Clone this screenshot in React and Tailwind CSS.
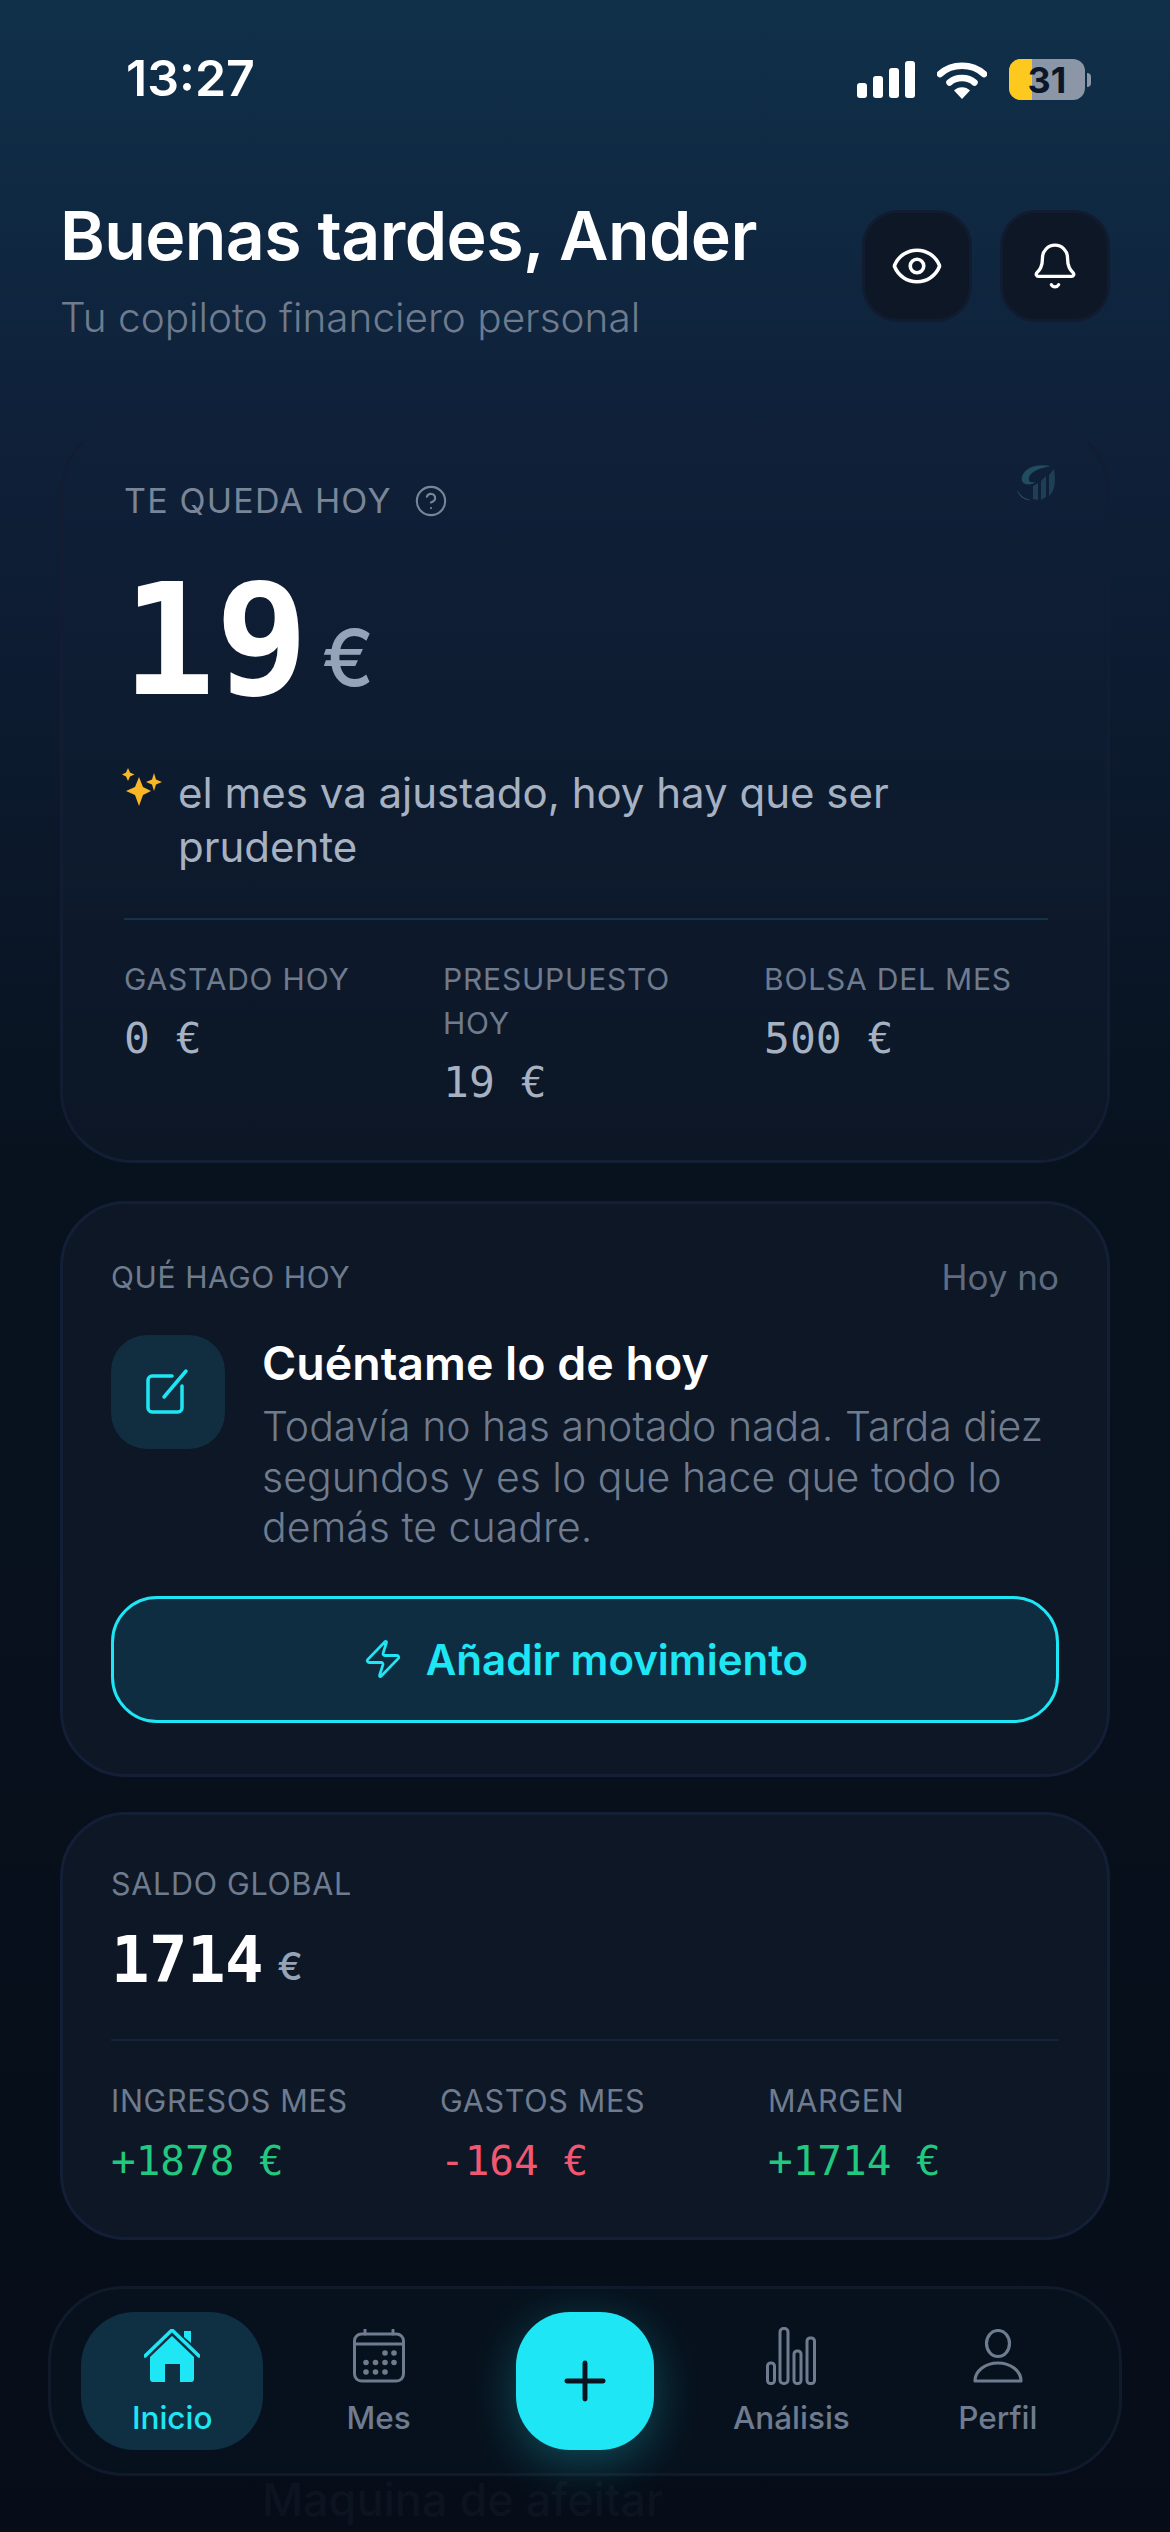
import { Bell, CircleHelp, Eye, Plus, Zap } from "lucide-react";

const sans = "font-['Inter',sans-serif]";
const mono = "font-['DejaVu_Sans_Mono',monospace]";

const todayStats = [
  { label: "GASTADO HOY", value: "0 €" },
  { label: "PRESUPUESTO HOY", value: "19 €" },
  { label: "BOLSA DEL MES", value: "500 €" },
];

const monthStats = [
  { label: "INGRESOS MES", value: "+1878 €", color: "text-[#22c87f]" },
  { label: "GASTOS MES", value: "-164 €", color: "text-[#f25772]" },
  { label: "MARGEN", value: "+1714 €", color: "text-[#22c87f]" },
];

function StatusBar() {
  return (
    <div className="flex h-[124px] items-end justify-between pb-[24px] pl-[126px] pr-[79px]">
      <span className="mb-[-3px] font-['Inter',sans-serif] text-[50px] leading-[50px] font-semibold text-white">13:27</span>
      <div className="flex items-center gap-[22px]">
        <div className="flex items-end gap-[6px]">
          <span className="h-[15px] w-[10px] rounded-[3px] bg-white" />
          <span className="h-[22px] w-[10px] rounded-[3px] bg-white" />
          <span className="h-[30px] w-[10px] rounded-[3px] bg-white" />
          <span className="h-[37px] w-[10px] rounded-[3px] bg-white" />
        </div>
        <svg width="50" height="38" viewBox="0 0 50 38" fill="none">
          <path d="M3 13C15 2 35 2 47 13" stroke="white" strokeWidth="6.5" strokeLinecap="round" />
          <path d="M12.5 21.5C19 15.5 31 15.5 37.5 21.5" stroke="white" strokeWidth="6.5" strokeLinecap="round" />
          <path d="M17 29.5C21 25 29 25 33 29.5L25 38Z" fill="white" />
        </svg>
        <div className="flex items-center gap-[2px]">
          <div className="relative h-[41px] w-[76px] overflow-hidden rounded-[12px] bg-[#8b96a6]">
            <div className="h-full w-[23px] bg-[#fdc91e]" />
            <span className="absolute inset-0 flex items-center justify-center font-['Inter',sans-serif] text-[36px] font-bold text-[#0d1626]">31</span>
          </div>
          <span className="h-[14px] w-[4px] rounded-r-full bg-[#8b96a6]" />
        </div>
      </div>
    </div>
  );
}

function Header() {
  return (
    <div className="mt-[75px] flex items-start justify-between pl-[60px] pr-[60px]">
      <div>
        <h1 className={`${sans} text-[68px] leading-[72px] font-semibold tracking-[-0.6px] text-white`}>Buenas tardes, Ander</h1>
        <p className={`${sans} mt-[22px] text-[40.500px] leading-[50px] font-light text-[#6f7b8e]`}>Tu copiloto financiero personal</p>
      </div>
      <div className="mt-[11px] flex gap-[28px]">
        <button className="flex h-[112px] w-[110px] items-center justify-center rounded-[36px] border-[3px] border-[#111c30] bg-[#0e1726] text-white">
          <Eye size={54} strokeWidth={1.6} />
        </button>
        <button className="flex h-[112px] w-[110px] items-center justify-center rounded-[36px] border-[3px] border-[#111c30] bg-[#0e1726] text-white">
          <Bell size={50} strokeWidth={1.6} />
        </button>
      </div>
    </div>
  );
}

function Logo() {
  return (
    <svg width="40" height="40" viewBox="0 0 40 40" fill="none" className="opacity-60">
      <path d="M6 14C8 5 20 0 35 3C25 5 14 8 13 15C12 19 16 20 20 19C12 24 4 21 6 14Z" fill="#2f6b7c" />
      <path d="M17 23L22 20V37L17 36ZM25 18L30 13V34L25 37ZM33 12L38 6C40 18 39 28 33 33Z" fill="#2a5566" />
      <path d="M1 27C5 33 9 36 15 37C9 38 3 34 1 27Z" fill="#2f6b7c" />
    </svg>
  );
}

function Sparkles() {
  return (
    <svg width="40" height="38" viewBox="0 0 40 38" className="mt-[-2px] shrink-0">
      <path d="M17 9L21 19L29 23L21 27L17 38L13 27L4 23L13 19Z" fill="#f9b626" />
      <path d="M32 5L34 11.500L40 14L34 16.500L32 23L30 16.500L24 14L30 11.500Z" fill="#f9b626" />
      <path d="M6 0L8 4.500L12.500 6.500L8 8.500L6 13L4 8.500L0 6.500L4 4.500Z" fill="#f9b626" />
    </svg>
  );
}

function TodayCard() {
  return (
    <section className="mx-[60px] mt-[77px] h-[743px] rounded-[72px] border-[3px] border-transparent border-b-[#131f36] border-l-[#121d33] border-r-[#121d33] bg-linear-to-b bg-origin-border from-[#0f2039] to-[#0c1625] px-[61px]">
      <div className="flex items-start justify-between pt-[60px]">
        <div className="flex items-center gap-[22px]">
          <span className={`${sans} text-[34px] leading-[36px] tracking-[1.2px] text-[#7a8598]`}>TE QUEDA HOY</span>
          <CircleHelp size={34} strokeWidth={1.5} className="text-[#7a8598]" />
        </div>
        <div className="mr-[-10px] mt-[-20px]">
          <Logo />
        </div>
      </div>
      <div className="mt-[38px] flex items-end">
        <span className={`${mono} ml-[-2px] text-[155px] leading-[168px] font-bold text-white`}>19</span>
        <span className={`${sans} mb-[25px] ml-[13px] text-[78px] leading-[84px] font-medium text-[#94a3b8]`}>€</span>
      </div>
      <div className="mt-[41px] flex gap-[16px]">
        <div className="-ml-[2px] pt-[4px]">
          <Sparkles />
        </div>
        <p className={`${sans} w-[800px] text-[42px] leading-[54px] text-[#a6b1c2]`}>el mes va ajustado, hoy hay que ser prudente</p>
      </div>
      <div className="mt-[44px] h-[2px] w-[924px] bg-[#14334a]" />
      <div className="mt-[37px] grid grid-cols-[319px_321px_1fr]">
        {todayStats.map((stat) => (
          <div key={stat.label}>
            <div className={`${sans} w-[270px] text-[30px] leading-[44px] tracking-[0.8px] text-[#6f7b8e]`}>{stat.label}</div>
            <div className={`${mono} mt-[12px] text-[43px] leading-[50px] text-[#a6b1c2]`}>{stat.value}</div>
          </div>
        ))}
      </div>
    </section>
  );
}

function ActionCard() {
  return (
    <section className="mx-[60px] mt-[38px] h-[576px] rounded-[66px] border-[3px] border-[#131f36] bg-[#0d1726] px-[48px] pt-[53px]">
      <div className="flex items-center justify-between">
        <span className={`${sans} text-[30px] leading-[40px] tracking-[0.6px] text-[#6f7b8e]`}>QUÉ HAGO HOY</span>
        <span className={`${sans} text-[35px] leading-[40px] text-[#5f6b7e]`}>Hoy no</span>
      </div>
      <div className="mt-[38px] flex items-start gap-[37px]">
        <div className="flex h-[114px] w-[114px] shrink-0 items-center justify-center rounded-[36px] bg-[#112d40]">
          <svg width="48" height="48" viewBox="0 0 48 48" fill="none" stroke="#1fe6f5" strokeWidth="3.5" strokeLinecap="round" strokeLinejoin="round">
            <path d="M28 8H8C6 8 4 10 4 12V40C4 42 6 44 8 44H34C36 44 38 42 38 40V18" />
            <path d="M20 29L42 3" />
          </svg>
        </div>
        <div className="min-w-0">
          <h2 className={`${sans} mt-[2px] text-[46.500px] leading-[52px] font-semibold text-white`}>Cuéntame lo de hoy</h2>
          <p className={`${sans} mt-[12px] w-[800px] text-[41px] leading-[50.500px] font-light text-[#6f7b8e]`}>
            Todavía no has anotado nada. Tarda diez segundos y es lo que hace que todo lo demás te cuadre.
          </p>
        </div>
      </div>
      <button className="mt-[43px] flex h-[127px] w-full items-center justify-center gap-[22px] rounded-[46px] border-[3px] border-[#1fe6f5] bg-[#0f2d40]">
        <Zap size={42} strokeWidth={1.6} className="text-[#1fe6f5]" />
        <span className={`${sans} text-[42px] font-semibold text-[#1fe6f5]`}>Añadir movimiento</span>
      </button>
    </section>
  );
}

function BalanceCard() {
  return (
    <section className="mx-[60px] mt-[35px] h-[428px] rounded-[66px] border-[3px] border-[#131f36] bg-[#0d1726] px-[48px] pt-[49px]">
      <div className={`${sans} text-[30.500px] leading-[40px] tracking-[0.7px] text-[#6f7b8e]`}>SALDO GLOBAL</div>
      <div className="mt-[18px] flex items-end gap-[14px]">
        <span className={`${mono} text-[64px] leading-[76px] font-bold tracking-[-0.5px] text-white`}>1714</span>
        <span className={`${sans} mb-[10px] text-[38px] leading-[44px] font-medium text-[#94a3b8]`}>€</span>
      </div>
      <div className="mt-[41px] h-[2px] w-full bg-[#14233a]" />
      <div className="mt-[40px] grid grid-cols-[329px_328px_1fr]">
        {monthStats.map((stat) => (
          <div key={stat.label}>
            <div className={`${sans} text-[30.500px] leading-[40px] tracking-[0.7px] text-[#6f7b8e]`}>{stat.label}</div>
            <div className={`${mono} mt-[15px] text-[41px] leading-[50px] ${stat.color}`}>{stat.value}</div>
          </div>
        ))}
      </div>
    </section>
  );
}

function HomeIcon() {
  return (
    <svg width="56" height="54" viewBox="0 0 56 54" fill="#1fe6f5">
      <path d="M40 2H47V14L40 8Z" />
      <path d="M1 27L28 1L55 27" fill="none" stroke="#1fe6f5" strokeWidth="3.500" strokeLinecap="round" strokeLinejoin="round" />
      <path d="M28 7L50 28V50C50 52 49 53 47 53H36V35H21V53H9C7 53 6 52 6 50V28Z" />
    </svg>
  );
}

function CalendarIcon() {
  return (
    <svg width="52" height="54" viewBox="0 0 52 54" fill="none" stroke="#6f7b8e" strokeWidth="3">
      <rect x="1.500" y="5" width="49" height="47" rx="7" />
      <path d="M1.500 15H50.500" />
      <path d="M12 1V5M40 1V5" strokeLinecap="round" />
      <g fill="#6f7b8e" stroke="none">
        <circle cx="32" cy="24" r="2.800" /><circle cx="41" cy="24" r="2.800" />
        <circle cx="13" cy="33.500" r="2.800" /><circle cx="22.500" cy="33.500" r="2.800" /><circle cx="32" cy="33.500" r="2.800" /><circle cx="41" cy="33.500" r="2.800" />
        <circle cx="13" cy="43" r="2.800" /><circle cx="22.500" cy="43" r="2.800" /><circle cx="32" cy="43" r="2.800" />
      </g>
    </svg>
  );
}

function BarsIcon() {
  return (
    <svg width="50" height="58" viewBox="0 0 50 58" fill="none" stroke="#6f7b8e" strokeWidth="3">
      <rect x="1.500" y="36" width="7" height="20.500" rx="3" />
      <rect x="14" y="1.500" width="8" height="55" rx="3.500" />
      <rect x="28" y="24" width="7" height="32.500" rx="3" />
      <rect x="41" y="11" width="7.500" height="45.500" rx="3" />
    </svg>
  );
}

function UserIcon() {
  return (
    <svg width="50" height="54" viewBox="0 0 50 54" fill="none" stroke="#6f7b8e" strokeWidth="3.200" strokeLinejoin="round">
      <ellipse cx="25" cy="14.500" rx="11.500" ry="13" />
      <path d="M2 52C2 42 12 34 25 34C38 34 48 42 48 52Z" />
    </svg>
  );
}

function NavItem({ icon, label, active }) {
  return (
    <div className={`mx-[12px] flex h-[138px] flex-col items-center rounded-[54px] pt-[16px] ${active ? "bg-[#0f2f43]" : ""}`}>
      <div className="flex h-[56px] items-center">{icon}</div>
      <span className={`${sans} mt-[16px] text-[31.500px] leading-[36px] font-medium ${active ? "text-[#1fe6f5]" : "text-[#6f7b8e]"}`}>{label}</span>
    </div>
  );
}

function BottomNav() {
  return (
    <>
      <span className={`${sans} absolute left-[262px] top-[2472px] text-[45px] leading-[56px] font-medium text-[#0c1420]`}>Maquina de afeitar</span>
      <nav className="absolute left-[48px] top-[2286px] grid h-[190px] w-[1074px] grid-cols-5 items-center rounded-[76px] border-[3px] border-[#0f1a2b] bg-[#07111d] px-[18px]">
        <NavItem icon={<HomeIcon />} label="Inicio" active />
        <NavItem icon={<CalendarIcon />} label="Mes" />
        <div className="flex justify-center">
          <button className="flex h-[138px] w-[138px] items-center justify-center rounded-[54px] bg-[#1fe6f5] text-[#0a1420] shadow-[0_12px_48px_rgba(31,230,245,0.28)]">
            <Plus size={62} strokeWidth={1.9} />
          </button>
        </div>
        <NavItem icon={<BarsIcon />} label="Análisis" />
        <NavItem icon={<UserIcon />} label="Perfil" />
      </nav>
    </>
  );
}

export default function App() {
  return (
    <main className="relative h-[2532px] w-[1170px] overflow-hidden bg-[linear-gradient(to_bottom,#10304a_0%,#0f2039_17%,#08121f_46%,#060d18_100%)]">
      <StatusBar />
      <Header />
      <TodayCard />
      <ActionCard />
      <BalanceCard />
      <BottomNav />
    </main>
  );
}
